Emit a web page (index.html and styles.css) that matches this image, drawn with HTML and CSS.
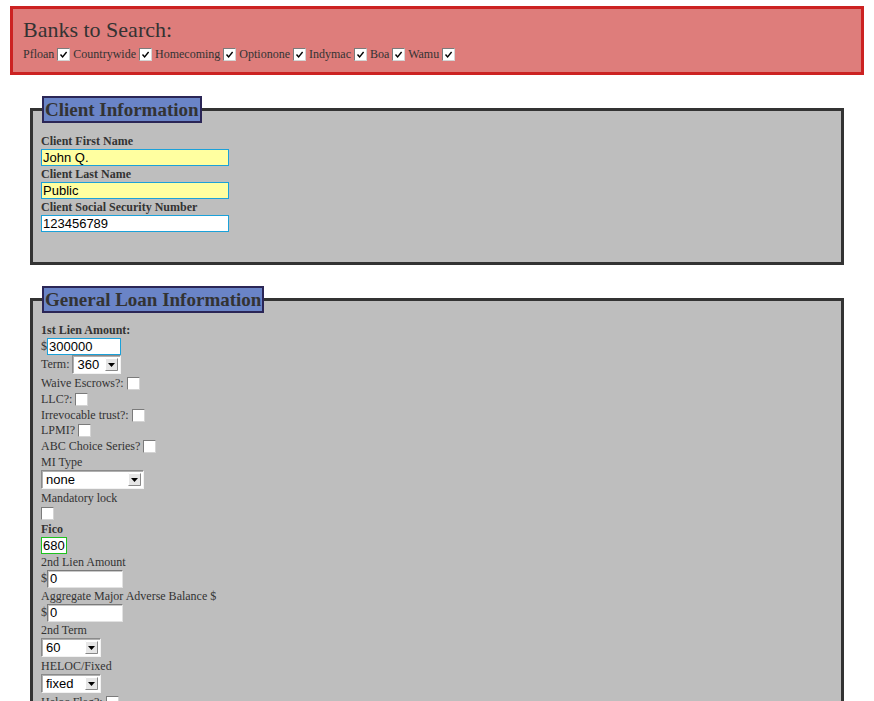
FILE: index.html
```html
<!DOCTYPE html>
<html>
<head>
<meta charset="utf-8">
<title>Loan Search</title>
<link rel="stylesheet" href="styles.css">
</head>
<body>
<div class="banks">
  <h1 class="banks-title">Banks to Search:</h1>
  <div class="banks-list">Pfloan <input type="checkbox" class="cb" checked> Countrywide <input type="checkbox" class="cb" checked> Homecoming <input type="checkbox" class="cb" checked> Optionone <input type="checkbox" class="cb" checked> Indymac <input type="checkbox" class="cb" checked> Boa <input type="checkbox" class="cb" checked> Wamu <input type="checkbox" class="cb" checked></div>
</div>

<fieldset class="section section-client">
  <legend class="section-title">Client Information</legend>
  <div class="line bold">Client First Name</div>
  <div class="row"><input type="text" class="text text-blue text-yellow w-name" value="John Q."></div>
  <div class="line bold">Client Last Name</div>
  <div class="row"><input type="text" class="text text-blue text-yellow w-name" value="Public"></div>
  <div class="line bold">Client Social Security Number</div>
  <div class="row"><input type="text" class="text text-blue w-name" value="123456789"></div>
</fieldset>

<fieldset class="section section-loan">
  <legend class="section-title">General Loan Information</legend>
  <div class="line bold">1st Lien Amount:</div>
  <div class="row">$<input type="text" class="text text-blue w-amt" value="300000"></div>
  <div class="row-sel">Term: <select class="sel w-term"><option>360</option></select></div>
  <div class="line line-cb">Waive Escrows?: <input type="checkbox" class="cb"></div>
  <div class="line line-cb">LLC?: <input type="checkbox" class="cb"></div>
  <div class="line line-cb">Irrevocable trust?: <input type="checkbox" class="cb"></div>
  <div class="line line-cb">LPMI? <input type="checkbox" class="cb"></div>
  <div class="line line-cb">ABC Choice Series? <input type="checkbox" class="cb"></div>
  <div class="line">MI Type</div>
  <div class="row-sel"><select class="sel w-mi"><option>none</option></select></div>
  <div class="line">Mandatory lock</div>
  <div class="row-cb"><input type="checkbox" class="cb"></div>
  <div class="line bold">Fico</div>
  <div class="row"><input type="text" class="text text-green w-fico" value="680"></div>
  <div class="line">2nd Lien Amount</div>
  <div class="row row-tall">$<input type="text" class="text text-inset w-amt2" value="0"></div>
  <div class="line">Aggregate Major Adverse Balance $</div>
  <div class="row row-tall">$<input type="text" class="text text-inset w-amt2" value="0"></div>
  <div class="line">2nd Term</div>
  <div class="row-sel"><select class="sel w-small"><option>60</option></select></div>
  <div class="line">HELOC/Fixed</div>
  <div class="row-sel"><select class="sel w-small"><option>fixed</option></select></div>
  <div class="line">Heloc Flag?: <input type="checkbox" class="cb"></div>
  <div class="line">Property Type</div>
  <div class="row-sel"><select class="sel w-mi"><option>sfr</option></select></div>
</fieldset>
</body>
</html>
```

FILE: styles.css
```css
html, body {
  margin: 0;
  padding: 0;
  background: #ffffff;
}

body {
  font-family: "Liberation Serif", "Times New Roman", serif;
  font-size: 12px;
  color: #333333;
}

.banks {
  margin: 6px 10px 0;
  border: 3px solid #cc2222;
  background: #de7d7b;
  padding: 8px 10px 10px;
}

.banks-title {
  margin: 0;
  font-size: 22px;
  font-weight: normal;
  line-height: 25px;
  color: #333333;
}

.banks-list {
  margin-top: 5px;
  font-size: 12px;
  line-height: 15px;
}

.cb {
  -webkit-appearance: none;
  appearance: none;
  box-sizing: border-box;
  width: 13px;
  height: 13px;
  margin: 0;
  border: 1px solid;
  border-color: #7b7b7b #d4d4d4 #d4d4d4 #7b7b7b;
  background: #ffffff;
  vertical-align: -3px;
}

.cb:checked {
  background: #ffffff url("data:image/svg+xml,%3Csvg xmlns='http://www.w3.org/2000/svg' width='11' height='11'%3E%3Cpath d='M2.5 5.5 L4.6 8 L8.6 3' fill='none' stroke='%23000' stroke-width='1.4'/%3E%3C/svg%3E") no-repeat center;
}

.section {
  margin: 21px 30px 0;
  border: 3px solid #333333;
  background: #bebebe;
  padding: 10px 8px 30px;
  min-width: 0;
}

.section-title {
  margin-left: 1px;
  padding: 0 1px;
  border: 2px solid #2b2656;
  background: #6a84c7;
  font-size: 19px;
  font-weight: bold;
  line-height: 23px;
  height: 23px;
  color: #333333;
}

.section-loan {
  padding-top: 9px;
  padding-bottom: 40px;
}

.line {
  line-height: 16px;
  height: 16px;
  white-space: nowrap;
}

.line-cb {
  height: 15.8px;
}

.bold {
  font-weight: bold;
}

.row {
  height: 17px;
  line-height: 17px;
  display: flex;
  align-items: center;
}

.row-tall {
  height: 18px;
}

.row-sel {
  height: 19px;
  display: flex;
  align-items: center;
  gap: 3px;
  margin-bottom: 1px;
}

.row-cb {
  height: 15px;
  display: flex;
  align-items: center;
}

.text {
  box-sizing: border-box;
  height: 17px;
  margin: 0;
  padding: 0 1px;
  font-family: "Liberation Sans", Arial, sans-serif;
  font-size: 13px;
  color: #000000;
  background: #ffffff;
  outline: none;
}

.text-blue {
  border: 1px solid #1ba1d9;
}

.text-yellow {
  background: #ffffa0;
}

.text-green {
  border: 1px solid #1ec21e;
}

.text-inset {
  height: 18px;
  border: 1px solid;
  border-color: #7a7a7a #e2e2e2 #e2e2e2 #7a7a7a;
  box-shadow: inset 1px 1px 0 #c8c8c8;
  padding-left: 2px;
}

.w-name { width: 188px; }
.w-amt { width: 74px; }
.w-amt2 { width: 76px; }
.w-fico { width: 26px; }

.sel {
  -webkit-appearance: none;
  appearance: none;
  box-sizing: border-box;
  height: 19px;
  margin: 0;
  padding: 0 0 0 4px;
  border: 1px solid;
  border-color: #8a8a8a #f2f2f2 #f2f2f2 #8a8a8a;
  box-shadow: inset 1px 1px 0 #b0b0b0;
  font-family: "Liberation Sans", Arial, sans-serif;
  font-size: 13px;
  color: #000000;
  background: #ffffff url("data:image/svg+xml,%3Csvg xmlns='http://www.w3.org/2000/svg' width='13' height='13'%3E%3Crect x='0' y='0' width='13' height='13' fill='%23e6e6e6'/%3E%3Cpath d='M0.5 12.5 V0.5 H12.5' fill='none' stroke='%23ffffff'/%3E%3Cpath d='M0.5 12.5 H12.5 V0.5' fill='none' stroke='%23888888'/%3E%3Cpolygon points='3,5 10,5 6.5,9' fill='%23000'/%3E%3C/svg%3E") no-repeat right 2px center;
  outline: none;
}

.w-term { width: 49px; }
.w-mi { width: 103px; }
.w-small { width: 60px; }
```
